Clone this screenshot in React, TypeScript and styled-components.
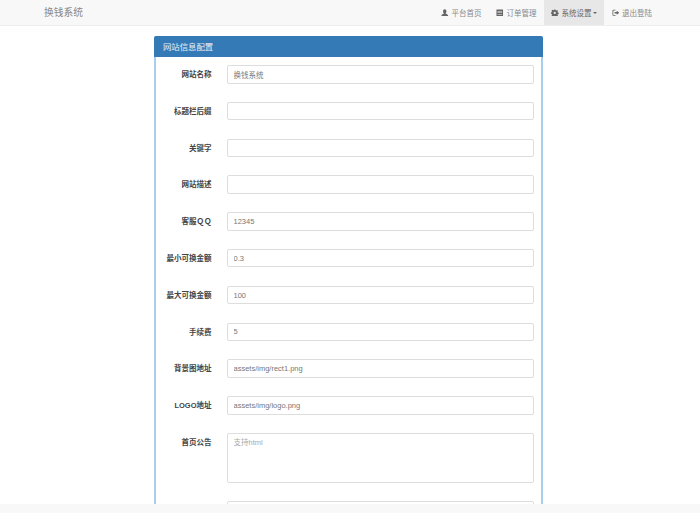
import React from "react";
import styled, { createGlobalStyle } from "styled-components";

const Global = createGlobalStyle`
  html, body { margin: 0; padding: 0; height: 513px; overflow: hidden; background: #fff; }
  body { font-family: "Liberation Sans", "Noto Sans CJK SC", sans-serif; color: #333; font-size: 8px; }
  #root { height: 513px; }
`;

const Page = styled.div`
  height: 513px;
  display: flex;
  flex-direction: column;
  overflow: hidden;
`;

const Navbar = styled.header`
  height: 25px;
  flex: none;
  box-sizing: content-box;
  background: #f8f8f8;
  border-bottom: 1px solid #eee;
  display: flex;
  justify-content: space-between;
  padding: 0 40.6px 0 44px;
`;

const Brand = styled.div`
  font-size: 9.75px;
  line-height: 25px;
  color: #888;
`;

const NavList = styled.nav`
  display: flex;
`;

const NavItem = styled.a<{ $active?: boolean }>`
  display: flex;
  align-items: center;
  gap: 2.5px;
  padding: 0 7.5px;
  height: 25px;
  font-size: 7.5px;
  color: ${(p) => (p.$active ? "#666" : "#888")};
  background: ${(p) => (p.$active ? "#e7e7e7" : "transparent")};
`;

const NavIcon = styled.svg`
  width: 7.5px;
  height: 7.5px;
  fill: #666;
  flex: none;
`;

const Caret = styled.span`
  width: 0;
  height: 0;
  margin-left: -1px;
  border-top: 2.5px solid #666;
  border-left: 2.5px solid transparent;
  border-right: 2.5px solid transparent;
`;

const Main = styled.main`
  flex: 1;
  min-height: 0;
  padding: 10px 0 0 154px;
  overflow: hidden;
`;

const Panel = styled.section`
  width: 389px;
  box-sizing: border-box;
  border-left: 2px solid #a9cdec;
  border-right: 2px solid #a9cdec;
  border-radius: 3px 3px 0 0;
  background: #fff;
`;

const PanelHeading = styled.h2`
  margin: 0 -2px;
  height: 21px;
  padding: 1px 9px 0;
  box-sizing: border-box;
  background: #337ab7;
  border-radius: 2px 2px 0 0;
  color: #e8f0f8;
  font-size: 8.4px;
  font-weight: 400;
  line-height: 20px;
`;

const Form = styled.form`
  display: flex;
  flex-direction: column;
  gap: 18.3px;
  padding: 8px 0 0 0;
`;

const Row = styled.div`
  display: grid;
  grid-template-columns: 55.5px 307px;
  column-gap: 15.5px;
`;

const Label = styled.label`
  height: 18.5px;
  text-align: right;
  font-size: 7.5px;
  font-weight: 700;
  line-height: 20px;
  color: #444;
  white-space: nowrap;
`;

const Input = styled.input`
  box-sizing: border-box;
  width: 100%;
  height: 18.5px;
  padding: 0 5.5px;
  border: 1px solid #ddd;
  border-radius: 2px;
  background: #fff;
  color: #777;
  font-family: inherit;
  font-size: 7.5px;
  outline: none;
`;

const TextArea = styled.textarea`
  display: block;
  box-sizing: border-box;
  width: 100%;
  height: 50px;
  padding: 2px 5.5px;
  border: 1px solid #ddd;
  border-radius: 2px;
  color: #777;
  font-family: inherit;
  font-size: 7.5px;
  resize: none;
  outline: none;
  &::placeholder { color: #aaa; opacity: 1; }
`;

const Footer = styled.footer`
  height: 9px;
  flex: none;
  background: #f8f8f8;
`;

const fields: [string, string][] = [
  ["网站名称", "换钱系统"],
  ["标题栏后缀", ""],
  ["关键字", ""],
  ["网站描述", ""],
  ["客服ＱＱ", "12345"],
  ["最小可换金额", "0.3"],
  ["最大可换金额", "100"],
  ["手续费", "5"],
  ["背景图地址", "assets/img/rect1.png"],
  ["LOGO地址", "assets/img/logo.png"],
];

const UserIcon = () => (
  <NavIcon viewBox="0 0 16 16">
    <path d="M8 .5c2.200 0 3.600 1.800 3.600 4.200S10.600 9 10 9.500v.8c2.600.8 5 1.700 5 3.300v1.900H1v-1.900c0-1.600 2.400-2.500 5-3.300v-.8C5.400 9 4.400 7.100 4.400 4.700S5.800.5 8 .5z" />
  </NavIcon>
);
const ListIcon = () => (
  <NavIcon viewBox="0 0 16 16">
    <path fillRule="evenodd" d="M1 1h14v14H1zM3 4v1.200h10V4zm0 3.200v1.200h10V7.200zm0 3.200v1.200h10v-1.200z" />
  </NavIcon>
);
const CogIcon = () => (
  <NavIcon viewBox="0 0 16 16">
    <path fillRule="evenodd" d="M6.600.8h2.800l.4 2 1.400.6 1.800-1.100 2 2-1.100 1.800.6 1.400 2 .4v2.800l-2 .4-.6 1.400 1.100 1.800-2 2-1.800-1.100-1.400.6-.4 2H6.600l-.4-2-1.400-.6L3 15.500l-2-2 1.100-1.800-.6-1.400-2-.4V7.100l2-.4.6-1.400L1 3.500l2-2 1.800 1.100 1.400-.6zM8 5.600a2.500 2.500 0 1 0 0 5 2.500 2.500 0 0 0 0-5z" />
  </NavIcon>
);
const LogoutIcon = () => (
  <NavIcon viewBox="0 0 16 16">
    <path d="M7.500 1.500v1.800H3.400a.6.600 0 0 0-.6.600v8.200c0 .3.300.6.600.6h4.100v1.800H3a2.400 2.400 0 0 1-2-2.400V3.900a2.400 2.400 0 0 1 2-2.400z" />
    <path d="M10 3.800 15.600 8 10 12.200V9.500H5.500v-3H10z" />
  </NavIcon>
);

export default function App() {
  return (
    <Page>
      <Global />
      <Navbar>
        <Brand>换钱系统</Brand>
        <NavList>
          <NavItem><UserIcon />平台首页</NavItem>
          <NavItem><ListIcon />订单管理</NavItem>
          <NavItem $active><CogIcon />系统设置<Caret /></NavItem>
          <NavItem><LogoutIcon />退出登陆</NavItem>
        </NavList>
      </Navbar>
      <Main>
        <Panel>
          <PanelHeading>网站信息配置</PanelHeading>
          <Form>
            {fields.map(([label, value]) => (
              <Row key={label}>
                <Label>{label}</Label>
                <Input defaultValue={value} />
              </Row>
            ))}
            <Row>
              <Label>首页公告</Label>
              <TextArea placeholder="支持html" />
            </Row>
            <Row>
              <Label />
              <Input />
            </Row>
          </Form>
        </Panel>
      </Main>
      <Footer />
    </Page>
  );
}
